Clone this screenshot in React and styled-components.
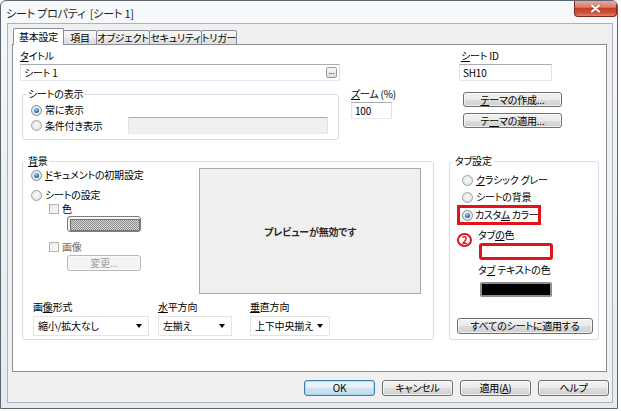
import React from 'react';
import styled, { createGlobalStyle, css } from 'styled-components';

const GlobalStyle = createGlobalStyle`
  html, body { margin: 0; padding: 0; background: #ffffff; }
  body {
    font-family: "Noto Sans CJK JP", "Noto Sans", sans-serif;
    font-size: 10px;
    letter-spacing: -0.2px;
    color: #000;
    font-feature-settings: "palt" 1;
  }
  * { box-sizing: border-box; }
`;

const Window = styled.div`
  width: 618px;
  height: 409px;
  border: 1px solid #5d6670;
  border-radius: 6px 6px 0 0;
  background: linear-gradient(180deg, #f7f9fb 0%, #eef1f4 40%, #e7ebef 100%);
  display: flex;
  flex-direction: column;
  overflow: hidden;
`;

const TitleBar = styled.div`
  height: 22px;
  flex: none;
  display: flex;
  align-items: flex-start;
`;

const TitleText = styled.div`
  margin: 4px 0 0 5px;
  font-size: 11px;
  line-height: 16px;
  color: #1e1e1e;
  white-space: pre;
`;

const CloseButton = styled.div`
  margin-left: auto;
  margin-top: -1px;
  width: 43px;
  height: 17px;
  border: 1px solid #7c2a20;
  border-top: none;
  border-radius: 0 0 4px 4px;
  background: linear-gradient(180deg, #eab0a4 0%, #dc7d6b 45%, #c5402b 52%, #cf4f39 80%, #e08369 100%);
  display: flex;
  align-items: center;
  justify-content: center;
`;

const Client = styled.div`
  flex: 1;
  margin: 0 4px 5px 6px;
  border: 1px solid #aab3bc;
  background: #f0f0f0;
  padding: 5px 4px 0 4px;
  display: flex;
  flex-direction: column;
`;

const TabStrip = styled.div`
  display: flex;
  align-items: flex-end;
  height: 16px;
  padding-left: 1px;
  margin-bottom: -1px;
  position: relative;
  z-index: 1;
`;

const Tab = styled.div`
  width: ${p => p.$w}px;
  height: ${p => (p.$active ? 17 : 15)}px;
  margin-left: ${p => (p.$first ? 0 : -1)}px;
  border: 1px solid #898c95;
  border-bottom: ${p => (p.$active ? 'none' : '1px solid #898c95')};
  border-radius: 2px 2px 0 0;
  background: ${p => (p.$active ? '#ffffff' : 'linear-gradient(180deg, #f6f6f6 0%, #efefef 50%, #e6e6e6 51%, #dedede 100%)')};
  display: flex;
  justify-content: center;
  align-items: ${p => (p.$active ? 'flex-start' : 'center')};
  padding-top: ${p => (p.$active ? 1 : 0)}px;
  line-height: 13px;
  white-space: nowrap;
  position: relative;
  z-index: ${p => (p.$active ? 2 : 1)};
`;

const Panel = styled.div`
  width: 595px;
  height: 328px;
  flex: none;
  border: 1px solid #898c95;
  background: #ffffff;
  padding: 5px 0 0 7px;
  display: flex;
  flex-direction: column;
`;

const Row = styled.div`
  display: flex;
  align-items: flex-start;
  margin-top: ${p => p.$mt || 0}px;
  padding-left: ${p => p.$pl || 0}px;
`;

const Col = styled.div`
  display: flex;
  flex-direction: column;
  width: ${p => (p.$w ? `${p.$w}px` : 'auto')};
  margin-left: ${p => p.$ml || 0}px;
  margin-top: ${p => p.$mt || 0}px;
  padding-left: ${p => p.$pl || 0}px;
  flex: none;
`;

const Label = styled.div`
  line-height: 12px;
  height: 12px;
  white-space: nowrap;
  padding-left: ${p => p.$pl || 0}px;
  margin-left: ${p => p.$ml || 0}px;
  margin-top: ${p => p.$mt || 0}px;
  color: ${p => (p.$disabled ? '#6d6d6d' : '#000')};
`;

const U = styled.span`
  text-decoration: underline;
  text-underline-offset: 1px;
`;

const TextBox = styled.div`
  height: 17px;
  width: ${p => (p.$w ? `${p.$w}px` : '100%')};
  margin-top: ${p => (p.$mt ?? 2)}px;
  margin-left: ${p => p.$ml || '0'};
  border: 1px solid;
  border-color: #abadb3 #dbdfe6 #e3e9ef #e2e3ea;
  background: ${p => (p.$disabled ? '#f0f0f0' : '#ffffff')};
  display: flex;
  align-items: center;
  padding-left: 3px;
  line-height: 12px;
  white-space: nowrap;
  flex: none;
`;

const EllipsisButton = styled.div`
  margin-left: auto;
  margin-right: 2px;
  width: 11px;
  height: 11px;
  border: 1px solid #9a9a9a;
  border-radius: 2px;
  background: linear-gradient(180deg, #fafafa, #dcdcdc);
  font-size: 8px;
  line-height: 6px;
  text-align: center;
  color: #333;
`;

const Button = styled.div`
  width: ${p => p.$w}px;
  height: ${p => p.$h || 16}px;
  margin-top: ${p => p.$mt || 0}px;
  margin-left: ${p => p.$ml || 0}px;
  border: 1px solid ${p => (p.$default ? '#3c7fb1' : p.$disabled ? '#b5b8bb' : '#707070')};
  border-radius: 3px;
  background: ${p => (p.$disabled
    ? '#f4f4f4'
    : p.$default
      ? 'linear-gradient(180deg, #eef6fb 0%, #e3eef6 50%, #d3e3ef 51%, #c6d9e8 100%)'
      : 'linear-gradient(180deg, #f2f2f2 0%, #ebebeb 50%, #dddddd 51%, #cfcfcf 100%)')};
  box-shadow: inset 0 0 0 1px ${p => (p.$default ? '#8fd4f3aa' : '#ffffffaa')};
  color: ${p => (p.$disabled ? '#a0a0a0' : '#000')};
  display: flex;
  align-items: center;
  justify-content: center;
  line-height: 12px;
  white-space: nowrap;
  flex: none;
`;

const Group = styled.fieldset`
  margin: 0 0 0 ${p => p.$ml || 0}px;
  padding: 0;
  width: ${p => p.$w}px;
  height: ${p => p.$h}px;
  border: 1px solid #d5dfe5;
  border-radius: 3px;
  min-width: 0;
  flex: none;
`;

const Legend = styled.legend`
  margin-left: 3px;
  padding: 0 2px;
  line-height: 12px;
  height: 12px;
`;

const OptionRow = styled.div`
  display: flex;
  align-items: center;
  height: ${p => p.$h || 14}px;
  margin-top: ${p => p.$mt || 0}px;
  padding-left: ${p => p.$pl || 0}px;
  padding-right: ${p => p.$pr || 0}px;
  gap: 3px;
  white-space: nowrap;
  line-height: 12px;
`;

const Highlight = styled.div`
  display: flex;
  align-items: center;
  align-self: flex-start;
  gap: 2px;
  height: 14px;
  margin-top: 4px;
  margin-left: 10px;
  padding: 0 0 0 2px;
  outline: 3px solid #e0141a;
  white-space: nowrap;
  line-height: 12px;
  letter-spacing: -0.4px;
`;

const Radio = styled.span`
  width: 11px;
  height: 11px;
  flex: none;
  border-radius: 50%;
  border: 1px solid #a3a3a3;
  background: radial-gradient(circle at 50% 45%, #fbfbfb 0%, #e9e9e9 55%, #d3d3d3 100%);
  display: inline-flex;
  align-items: center;
  justify-content: center;
  ${p => p.$checked && css`
    border-color: #8a8a8a;
    &::after {
      content: '';
      width: 5px;
      height: 5px;
      border-radius: 50%;
      background: radial-gradient(circle at 40% 35%, #a6dcfb 0%, #2f86d0 45%, #0d3c74 100%);
    }
  `}
`;

const Checkbox = styled.span`
  width: 10px;
  height: 10px;
  flex: none;
  border: 1px solid #b4b4b4;
  background: linear-gradient(135deg, #e8e8e8, #fbfbfb);
`;

const HatchSwatch = styled.div`
  width: 74px;
  height: 16px;
  margin-left: 36px;
  border: 1px solid #7d7d7d;
  border-radius: 3px;
  padding: 2px;
  background: #f4f4f4;
  &::after {
    content: '';
    display: block;
    width: 100%;
    height: 100%;
    border: 1px solid #777;
    background: repeating-conic-gradient(#8a8a8a 0 25%, #d8d8d8 0 50%) 0 0 / 2px 2px;
  }
`;

const Preview = styled.div`
  width: 222px;
  height: 126px;
  margin-top: 1px;
  border: 1px solid #a9a9a9;
  background: #f0f0f0;
  display: flex;
  align-items: center;
  justify-content: center;
  font-weight: 700;
  color: #2a2a2a;
  flex: none;
`;

const Dropdown = styled.div`
  width: ${p => p.$w}px;
  height: 20px;
  margin-top: 3px;
  border: 1px solid #e4e4e4;
  background: #ffffff;
  display: flex;
  align-items: center;
  padding: 0 6px 0 4px;
  line-height: 12px;
  white-space: nowrap;
  &::after {
    content: '';
    margin-left: auto;
    border-left: 3px solid transparent;
    border-right: 3px solid transparent;
    border-top: 4px solid #000;
  }
`;

const ColorSwatch = styled.div`
  width: 72px;
  height: 15px;
  margin-left: 30px;
  margin-top: ${p => p.$mt || 0}px;
  border: 2px solid #8d8d8d;
  border-radius: 2px;
  background: ${p => p.$color};
  flex: none;
  ${p => p.$marked && css`
    outline: 3px solid #e0141a;
    outline-offset: -2px;
  `}
`;

const CircledNumber = styled.span`
  width: 15px;
  height: 14px;
  margin-top: 4px;
  border: 2px solid #e0141a;
  border-radius: 50%;
  color: #e0141a;
  font-weight: 700;
  font-size: 10px;
  line-height: 10px;
  display: inline-flex;
  align-items: center;
  justify-content: center;
  flex: none;
`;

const NoteRow = styled.div`
  display: flex;
  align-items: flex-start;
  height: 15px;
  margin-top: 7px;
  margin-left: 7px;
  gap: 6px;
`;

const TabGroupBody = styled.div`
  display: flex;
  flex-direction: column;
  align-items: flex-start;
`;

const ButtonBar = styled.div`
  display: flex;
  justify-content: flex-end;
  gap: 7px;
  margin-top: 8px;
  margin-right: -1px;
`;

const tabs = [
  { label: '基本設定', w: 51, active: true },
  { label: '項目', w: 34 },
  { label: 'オブジェクト', w: 54 },
  { label: 'セキュリティ', w: 53 },
  { label: 'トリガー', w: 36 },
];

export default function App() {
  return (
    <>
      <GlobalStyle />
      <Window>
        <TitleBar>
          <TitleText>{'シート プロパティ\u00a0\u00a0[シート 1]'}</TitleText>
          <CloseButton>
            <svg width="11" height="9" viewBox="0 0 11 9">
              <path d="M2 1.5 L9 7.5 M9 1.5 L2 7.5" stroke="#5a1a12" strokeWidth="3.2" strokeLinecap="round" opacity="0.35" />
              <path d="M2 1.5 L9 7.5 M9 1.5 L2 7.5" stroke="#ffffff" strokeWidth="2.2" strokeLinecap="round" />
            </svg>
          </CloseButton>
        </TitleBar>
        <Client>
          <TabStrip>
            {tabs.map((t, i) => (
              <Tab key={t.label} $w={t.w} $active={t.active} $first={i === 0}>{t.label}</Tab>
            ))}
          </TabStrip>
          <Panel>
            <Row>
              <Col $w={320}>
                <Label><U>タ</U>イトル</Label>
                <TextBox>
                  シート 1
                  <EllipsisButton>...</EllipsisButton>
                </TextBox>
              </Col>
              <Col $w={93} $ml={119}>
                <Label $pl={2}><U>シ</U>ート ID</Label>
                <TextBox>SH10</TextBox>
              </Col>
            </Row>

            <Row $mt={7}>
              <Group $w={317} $h={52} $ml={2}>
                <Legend>シートの表示</Legend>
                <OptionRow $mt={3} $pl={8}>
                  <Radio $checked />
                  常に表示
                </OptionRow>
                <OptionRow $h={17} $pl={8} $pr={10}>
                  <Radio />
                  条件付き表示
                  <TextBox $w={200} $mt={0} $ml="auto" $disabled />
                </OptionRow>
              </Group>
              <Col $w={41} $ml={12}>
                <Label><U>ズ</U>ーム (%)</Label>
                <TextBox>100</TextBox>
              </Col>
              <Col $ml={71} $mt={4}>
                <Button $w={99} $h={15}><U>テ</U>ーマの作成...</Button>
                <Button $w={99} $h={15} $mt={6}>テ<U>ー</U>マの適用...</Button>
              </Col>
            </Row>

            <Row $mt={15}>
              <Group $w={412} $h={185} $ml={2}>
                <Legend><U>背</U>景</Legend>
                <Row>
                  <Col $w={176} $pl={8}>
                    <OptionRow $mt={1}>
                      <Radio $checked />
                      <span><U>ド</U>キュメントの初期設定</span>
                    </OptionRow>
                    <OptionRow $mt={6}>
                      <Radio />
                      シートの設定
                    </OptionRow>
                    <OptionRow $pl={18}>
                      <Checkbox />
                      <Label>色</Label>
                    </OptionRow>
                    <HatchSwatch />
                    <OptionRow $mt={8} $pl={18}>
                      <Checkbox />
                      <Label $disabled>画像</Label>
                    </OptionRow>
                    <Button $w={74} $ml={36} $mt={1} $disabled>変更...</Button>
                  </Col>
                  <Preview>プレビューが無効です</Preview>
                </Row>
                <Row $mt={7} $pl={10}>
                  <Col>
                    <Label>画<U>像</U>形式</Label>
                    <Dropdown $w={116}>縮小/拡大なし</Dropdown>
                  </Col>
                  <Col $ml={9}>
                    <Label><U>水</U>平方向</Label>
                    <Dropdown $w={74}>左揃え</Dropdown>
                  </Col>
                  <Col $ml={18}>
                    <Label><U>垂</U>直方向</Label>
                    <Dropdown $w={80}>上下中央揃え</Dropdown>
                  </Col>
                </Row>
              </Group>

              <Group $w={150} $h={185} $ml={15}>
                <Legend>タブ設定</Legend>
                <TabGroupBody>
                  <OptionRow $mt={6} $pl={12}>
                    <Radio />
                    <span><U>ク</U>ラシック グレー</span>
                  </OptionRow>
                  <OptionRow $mt={3} $pl={12}>
                    <Radio />
                    シートの背景
                  </OptionRow>
                  <Highlight>
                    <Radio $checked />
                    <span>カスタ<U>ム</U> カラー</span>
                  </Highlight>
                  <NoteRow>
                    <CircledNumber>2</CircledNumber>
                    <Label>タブ<U>の</U>色</Label>
                  </NoteRow>
                  <ColorSwatch $color="#ffffff" $marked />
                  <Label $ml={28} $mt={5}>タ<U>ブ</U> テキストの色</Label>
                  <ColorSwatch $color="#000000" $mt={6} />
                  <Button $w={136} $ml={7} $mt={21}>すべてのシートに適用する</Button>
                </TabGroupBody>
              </Group>
            </Row>
          </Panel>
          <ButtonBar>
            <Button $w={71} $default>OK</Button>
            <Button $w={71}>キャンセル</Button>
            <Button $w={71}>適用(<U>A</U>)</Button>
            <Button $w={71}>ヘルプ</Button>
          </ButtonBar>
        </Client>
      </Window>
    </>
  );
}
